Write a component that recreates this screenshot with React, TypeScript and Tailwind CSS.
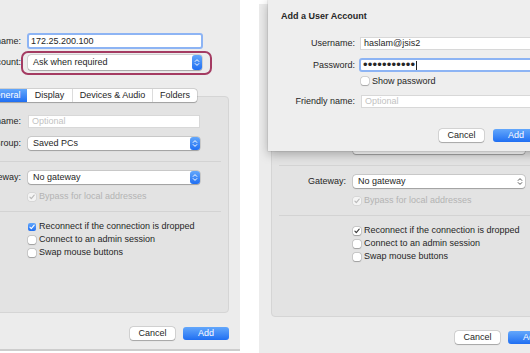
import React from "react";

const blue = "bg-linear-to-b from-[#63a7fb] to-[#1f6ef2]";
const raised = "shadow-[0_0_0_0.5px_rgba(0,0,0,0.2),0_0.5px_1px_rgba(0,0,0,0.22)]";

function Stepper({ active }: { active: boolean }) {
  return (
    <div
      className={`flex w-[10px] items-center justify-center rounded-[3px] ${active ? blue : ""}`}
    >
      <svg width="10" height="13" viewBox="0 0 10 13">
        <path
          d="M3.2 5.4L5 3.6L6.8 5.4M3.2 7.6L5 9.4L6.8 7.6"
          fill="none"
          stroke={active ? "#ffffff" : "#555555"}
          strokeWidth="1"
          strokeLinecap="round"
          strokeLinejoin="round"
        />
      </svg>
    </div>
  );
}

function Select({
  value,
  active,
  className = "",
}: {
  value: string;
  active: boolean;
  className?: string;
}) {
  return (
    <div className={`flex items-stretch rounded-[3px] bg-white ${raised} ${className}`}>
      <span className="flex-1 self-center pl-[5px]">{value}</span>
      <Stepper active={active} />
    </div>
  );
}

function Field({
  value,
  placeholder,
  focused,
  className = "",
}: {
  value?: string;
  placeholder?: string;
  focused?: boolean;
  className?: string;
}) {
  return (
    <div
      className={`flex items-center bg-white ${
        focused
          ? "rounded-[3px] border-2 border-[#8db4f4] pl-[2px]"
          : "border border-[#d8d8d8] pl-[3px]"
      } ${className}`}
    >
      {value ? (
        <span>{value}</span>
      ) : (
        <span className="text-[#c2c2c2]">{placeholder}</span>
      )}
    </div>
  );
}

type CheckKind = "blue" | "plain" | "disabled";

function Check({ checked, kind }: { checked: boolean; kind: CheckKind }) {
  const box =
    checked && kind === "blue"
      ? blue
      : kind === "disabled"
      ? "bg-[#f4f4f4] shadow-[0_0_0_0.5px_rgba(0,0,0,0.1)]"
      : `bg-white ${raised}`;
  const stroke = kind === "blue" ? "#ffffff" : kind === "disabled" ? "#b9b9b9" : "#3a3a3a";
  return (
    <div className={`flex h-[8px] w-[8px] shrink-0 items-center justify-center rounded-[2px] ${box}`}>
      {checked && (
        <svg width="8" height="8" viewBox="0 0 8 8">
          <path
            d="M1.9 4.1L3.3 5.7L6.2 2.1"
            fill="none"
            stroke={stroke}
            strokeWidth="1.1"
            strokeLinecap="round"
            strokeLinejoin="round"
          />
        </svg>
      )}
    </div>
  );
}

function CheckRow({
  label,
  checked,
  kind,
  className = "",
}: {
  label: string;
  checked: boolean;
  kind: CheckKind;
  className?: string;
}) {
  return (
    <div className={`flex h-[13px] items-center gap-[3px] pl-[81px] ${className}`}>
      <Check checked={checked} kind={kind} />
      <span className={kind === "disabled" ? "text-[#b3b3b3]" : ""}>{label}</span>
    </div>
  );
}

function Row({
  label,
  children,
  className = "",
}: {
  label: string;
  children: React.ReactNode;
  className?: string;
}) {
  return (
    <div className={`grid grid-cols-[74px_172px] items-center gap-x-[7px] ${className}`}>
      <span className="text-right">{label}</span>
      {children}
    </div>
  );
}

function Button({ label, primary }: { label: string; primary?: boolean }) {
  return (
    <div
      className={`h-[13px] rounded-[3px] text-center leading-[13px] ${
        primary ? `w-[46px] text-white ${blue}` : `w-[45px] bg-white ${raised}`
      }`}
    >
      {label}
    </div>
  );
}

// covered: the top of the window sits under the sheet, so its texts are not drawn
function Window({ active, mark, covered }: { active: boolean; mark?: boolean; covered?: boolean }) {
  const tab = "w-[45px] border-l border-[#dcdcdc] text-center leading-[13px]";
  const hide = covered ? "invisible" : "";
  return (
    <div className="h-[351px] w-[307px] shrink-0 border-b-2 border-[#cdcdcd] bg-[#ececec] pt-[33px]">
      <div className={`grid grid-cols-[87px_176px] items-center gap-x-[6px] ${hide}`}>
        <span className="text-right">PC name:</span>
        <Field value="172.25.200.100" focused={active} className="h-[16px]" />
      </div>

      <div className={`mt-[6px] grid grid-cols-[87px_174px] items-center gap-x-[7px] ${hide}`}>
        <span className="text-right">User account:</span>
        <div className="relative">
          <Select value="Ask when required" active={active} className="h-[15px]" />
          {mark && (
            <div className="absolute -bottom-[5px] -left-[7px] -right-[10px] -top-[4px] rounded-[7px] border-2 border-[#a43b62]" />
          )}
        </div>
      </div>

      <div
        className={`relative z-10 ml-[48px] mt-[19px] flex h-[13px] w-fit rounded-[3px] bg-white ${raised} ${hide}`}
      >
        <div
          className={`w-[45px] rounded-l-[3px] text-center leading-[13px] ${
            active ? `text-white ${blue}` : "bg-[#dcdcdc]"
          }`}
        >
          General
        </div>
        <div className="w-[45px] text-center leading-[13px]">Display</div>
        <div className={`${tab} w-[80px]`}>Devices &amp; Audio</div>
        <div className={`${tab} w-[44px]`}>Folders</div>
      </div>

      <div className="mx-[12px] mt-[-6px] h-[217px] rounded-[4px] border border-[#d5d5d5] bg-[#e3e3e3] pt-[18px]">
        <Row label="Friendly name:" className={hide}>
          <Field placeholder="Optional" className="h-[13px]" />
        </Row>
        <Row label={covered ? "" : "Group:"} className="mt-[9px]">
          <Select value={covered ? "" : "Saved PCs"} active={active} className="h-[13px]" />
        </Row>
        <div className="mx-[7px] mt-[11px] h-px bg-[#d3d3d3]" />
        <Row label="Gateway:" className="mt-[9px]">
          <Select value="No gateway" active={active} className="h-[13px]" />
        </Row>
        <CheckRow label="Bypass for local addresses" checked kind="disabled" className="mt-[6px] h-[12px]" />
        <div className="mx-[7px] mt-[8px] h-px bg-[#d3d3d3]" />
        <CheckRow
          label="Reconnect if the connection is dropped"
          checked
          kind={active ? "blue" : "plain"}
          className="mt-[8px]"
        />
        <CheckRow label="Connect to an admin session" checked={false} kind="plain" />
        <CheckRow label="Swap mouse buttons" checked={false} kind="plain" />
      </div>

      <div className="mt-[14px] flex justify-end gap-[8px] pr-[12px]">
        <Button label="Cancel" />
        <Button label="Add" primary />
      </div>
    </div>
  );
}

function Sheet() {
  return (
    <div className="absolute left-[9px] top-0 z-20 h-[151px] w-[290px] bg-[#eeeeee] pt-[10px] shadow-[0_3px_10px_rgba(0,0,0,0.28),0_0_0_0.5px_rgba(0,0,0,0.12)]">
      <div className="pl-[13px] font-bold leading-[12px]">Add a User Account</div>

      <div className="mt-[15px] grid grid-cols-[87px_179px] items-center gap-x-[5px]">
        <span className="text-right">Username:</span>
        <Field value="haslam@jsis2" className="h-[13px]" />
      </div>

      <div className="mt-[8px] grid grid-cols-[87px_181px] items-center gap-x-[4px]">
        <span className="text-right">Password:</span>
        <div className="flex h-[14px] items-center rounded-[3px] border-2 border-[#8db4f4] bg-white pl-[2px]">
          <span className="text-[13px] leading-[10px] tracking-[0.2px]">•••••••••••</span>
          <span className="ml-[1px] h-[9px] w-px bg-[#222222]" />
        </div>
      </div>

      <div className="mt-[5px] flex h-[8px] items-center gap-[3px] pl-[93px]">
        <Check checked={false} kind="plain" />
        <span>Show password</span>
      </div>

      <div className="mt-[10px] grid grid-cols-[87px_178px] items-center gap-x-[6px]">
        <span className="text-right">Friendly name:</span>
        <Field placeholder="Optional" className="h-[13px]" />
      </div>

      <div className="mt-[21px] flex justify-end gap-[9px] pr-[19px]">
        <Button label="Cancel" />
        <Button label="Add" primary />
      </div>
    </div>
  );
}

export default function App() {
  return (
    <div className="flex h-[353px] w-[530px] overflow-hidden bg-white font-['Liberation_Sans',Arial,sans-serif] text-[9px] leading-[13px] text-[#262626]">
      <div className="h-[353px] w-[240px] shrink-0 overflow-hidden">
        <div className="ml-[-66px]">
          <Window active mark />
        </div>
      </div>
      <div className="w-[19px] shrink-0" />
      <div className="relative h-[353px] w-[271px] shrink-0 overflow-hidden">
        <div className="mt-[4px]">
          <Window active={false} covered />
        </div>
        <Sheet />
      </div>
    </div>
  );
}
